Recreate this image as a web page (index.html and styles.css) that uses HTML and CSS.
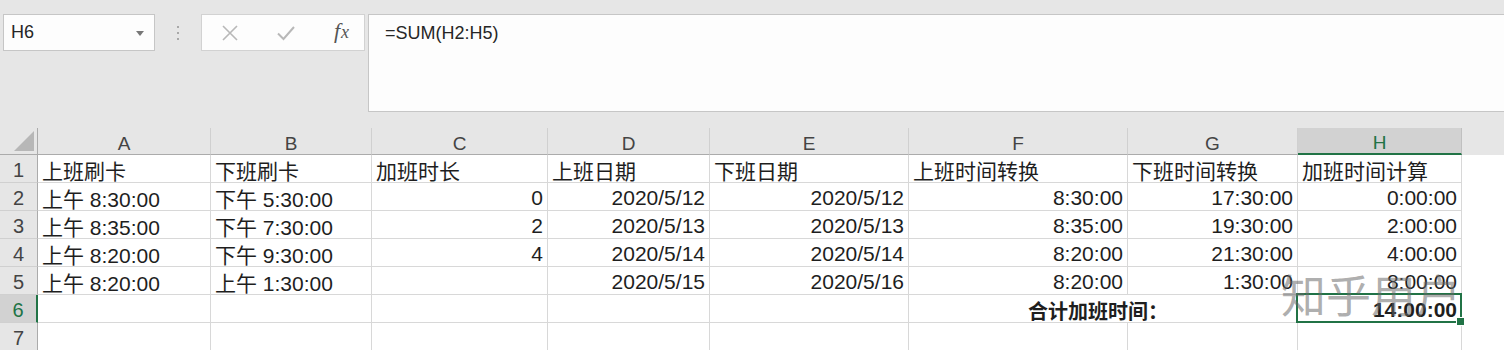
FILE: index.html
```html
<!DOCTYPE html>
<html lang="zh-CN">
<head>
<meta charset="utf-8">
<title>加班时间计算</title>
<link rel="stylesheet" href="styles.css">
</head>
<body>
<div class="app">
  <div class="toolbar">
    <div class="namebox">
      <span class="name">H6</span>
      <svg class="arrow" width="8" height="5" viewBox="0 0 8 5"><path d="M0 0h8L4 5z" fill="#777"/></svg>
    </div>
    <div class="grip">
      <svg width="4" height="14" viewBox="0 0 4 14"><rect x="1" y="0" width="2" height="2" fill="#a8a8a8"/><rect x="1" y="6" width="2" height="2" fill="#a8a8a8"/><rect x="1" y="12" width="2" height="2" fill="#a8a8a8"/></svg>
    </div>
    <div class="fxbox">
      <svg class="ic" width="18" height="18" viewBox="0 0 18 18"><path d="M2 2L16 16M16 2L2 16" stroke="#b8b8b8" stroke-width="1.6" fill="none"/></svg>
      <svg class="ic" width="20" height="18" viewBox="0 0 20 18"><path d="M2 9.5L7.5 15L18 3" stroke="#b8b8b8" stroke-width="2" fill="none"/></svg>
      <span class="fx"><i>f</i><i class="x">x</i></span>
    </div>
    <div class="formula">=SUM(H2:H5)</div>
  </div>

  <div class="sheet">
    <div class="corner"><span class="tri"></span></div>
    <div class="hd">A</div><div class="hd">B</div><div class="hd">C</div><div class="hd">D</div><div class="hd">E</div><div class="hd">F</div><div class="hd">G</div><div class="hd sel">H</div><div class="hd-fill"></div>

    <div class="rh">1</div>
    <div class="c">上班刷卡</div><div class="c">下班刷卡</div><div class="c">加班时长</div><div class="c">上班日期</div><div class="c">下班日期</div><div class="c">上班时间转换</div><div class="c">下班时间转换</div><div class="c">加班时间计算</div><div class="fill"></div>

    <div class="rh">2</div>
    <div class="c">上午 8:30:00</div><div class="c">下午 5:30:00</div><div class="c r">0</div><div class="c r">2020/5/12</div><div class="c r">2020/5/12</div><div class="c r">8:30:00</div><div class="c r">17:30:00</div><div class="c r">0:00:00</div><div class="fill"></div>

    <div class="rh">3</div>
    <div class="c">上午 8:35:00</div><div class="c">下午 7:30:00</div><div class="c r">2</div><div class="c r">2020/5/13</div><div class="c r">2020/5/13</div><div class="c r">8:35:00</div><div class="c r">19:30:00</div><div class="c r">2:00:00</div><div class="fill"></div>

    <div class="rh">4</div>
    <div class="c">上午 8:20:00</div><div class="c">下午 9:30:00</div><div class="c r">4</div><div class="c r">2020/5/14</div><div class="c r">2020/5/14</div><div class="c r">8:20:00</div><div class="c r">21:30:00</div><div class="c r">4:00:00</div><div class="fill"></div>

    <div class="rh">5</div>
    <div class="c">上午 8:20:00</div><div class="c">上午 1:30:00</div><div class="c r"></div><div class="c r">2020/5/15</div><div class="c r">2020/5/16</div><div class="c r">8:20:00</div><div class="c r">1:30:00</div><div class="c r">8:00:00</div><div class="fill"></div>

    <div class="rh sel">6</div>
    <div class="c"></div><div class="c"></div><div class="c"></div><div class="c"></div><div class="c"></div><div class="c total">合计加班时间：</div><div class="c r b active">14:00:00</div><div class="fill"></div>

    <div class="rh">7</div>
    <div class="c"></div><div class="c"></div><div class="c"></div><div class="c"></div><div class="c"></div><div class="c"></div><div class="c"></div><div class="c"></div><div class="fill"></div>

    <div class="watermark">知乎用户</div>
  </div>
</div>
</body>
</html>
```

FILE: styles.css
```css
* { box-sizing: border-box; }
html, body { margin: 0; padding: 0; }
body {
  background: #e6e6e6;
  font-family: "Liberation Sans", "Noto Sans CJK SC", sans-serif;
  color: #1e1e1e;
  overflow: hidden;
}
.app { width: 1504px; height: 350px; }

.toolbar {
  height: 112px;
  display: flex;
  align-items: flex-start;
  padding: 14px 0 0 3px;
}
.namebox {
  width: 152px;
  height: 37px;
  background: #fdfdfd;
  border: 1px solid #c6c6c6;
  display: flex;
  align-items: center;
  justify-content: space-between;
  padding: 0 10px 0 7px;
}
.name { font-size: 18px; color: #262626; }
.arrow { margin-top: 1px; }
.grip {
  width: 46px;
  height: 37px;
  display: flex;
  align-items: center;
  justify-content: center;
}
.fxbox {
  width: 164px;
  height: 37px;
  background: #fdfdfd;
  border: 1px solid #d2d2d2;
  display: flex;
  align-items: center;
  justify-content: space-between;
  padding: 0 15px 0 19px;
}
.fx {
  font-family: "Liberation Serif", "DejaVu Serif", serif;
  font-size: 22px;
  color: #555;
  padding-bottom: 3px;
}
.fx .x { font-size: 18px; margin-left: 1px; }
.formula {
  margin-left: 3px;
  flex: 1;
  height: 98px;
  background: #fdfdfd;
  border: 1px solid #c6c6c6;
  border-right: none;
  font-size: 18px;
  color: #262626;
  padding: 8px 0 0 16px;
}

.sheet {
  position: relative;
  margin-top: 16px;
  display: grid;
  grid-template-columns: 38px 173px 161px 176px 162px 199px 219px 170px 164px 1fr;
  grid-template-rows: 27px repeat(7, 28px);
  background: #fff;
}
.corner {
  background: #e6e6e6;
  border-right: 1px solid #ababab;
  border-bottom: 1px solid #ababab;
  position: relative;
}
.tri {
  position: absolute;
  right: 3px;
  bottom: 3px;
  width: 0;
  height: 0;
  border-left: 20px solid transparent;
  border-bottom: 20px solid #b7b7b7;
}
.hd {
  background: #e6e6e6;
  border-right: 1px solid #d0d0d0;
  border-bottom: 1px solid #ababab;
  font-size: 19px;
  color: #444;
  display: flex;
  align-items: center;
  justify-content: center;
  padding-top: 5px;
}
.hd.sel {
  background: #d2d2d2;
  color: #217346;
  border-bottom: 2px solid #217346;
  border-right: 1px solid #c0c0c0;
}
.hd-fill { background: #e6e6e6; }
.rh {
  background: #e6e6e6;
  border-right: 1px solid #ababab;
  border-bottom: 1px solid #d0d0d0;
  font-size: 20px;
  color: #444;
  display: flex;
  align-items: center;
  justify-content: center;
  padding-top: 3px;
}
.rh.sel {
  background: #d2d2d2;
  color: #217346;
  border-right: 2px solid #217346;
}
.c {
  border-right: 1px solid #d8d8d8;
  border-bottom: 1px solid #d8d8d8;
  font-size: 21px;
  color: #1e1e1e;
  display: flex;
  align-items: center;
  padding: 3px 4px 0 4px;
  white-space: nowrap;
}
.c.r { justify-content: flex-end; }
.c.b { font-weight: bold; }
.total {
  grid-column: span 2;
  font-weight: bold;
  font-size: 20px;
  padding-left: 119px;
}
.fill { background: #fff; }
.active { position: relative; }
.active::after {
  content: "";
  position: absolute;
  left: -2px;
  top: -2px;
  right: -1px;
  bottom: -1px;
  border: 2px solid #217346;
}
.active::before {
  content: "";
  position: absolute;
  right: -4px;
  bottom: -4px;
  width: 7px;
  height: 7px;
  background: #217346;
  border: 1px solid #fff;
  z-index: 2;
}
.watermark {
  position: absolute;
  left: 1281px;
  top: 143px;
  font-family: "Noto Sans CJK SC", sans-serif;
  font-size: 45px;
  line-height: 1;
  color: rgba(105, 105, 105, 0.55);
  letter-spacing: 0;
  pointer-events: none;
  white-space: nowrap;
}
```
